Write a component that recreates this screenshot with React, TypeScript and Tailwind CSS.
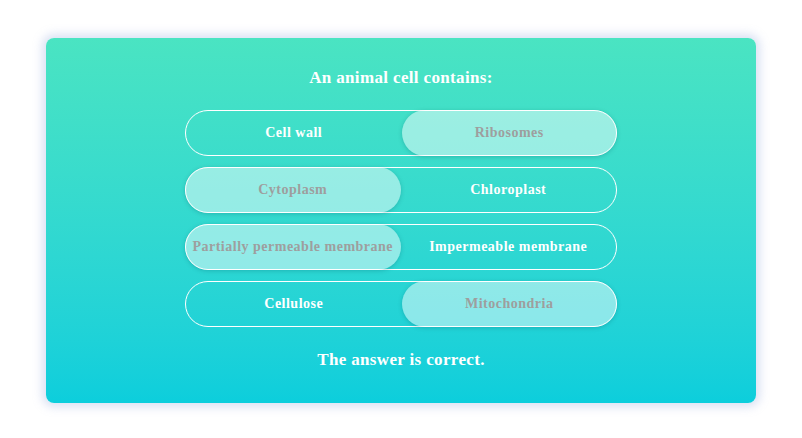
import React from "react";

const rows: { left: string; right: string; sel: "left" | "right" }[] = [
  { left: "Cell wall", right: "Ribosomes", sel: "right" },
  { left: "Cytoplasm", right: "Chloroplast", sel: "left" },
  { left: "Partially permeable membrane", right: "Impermeable membrane", sel: "left" },
  { left: "Cellulose", right: "Mitochondria", sel: "right" },
];

function Option({ text, selected, side }: { text: string; selected: boolean; side: "left" | "right" }) {
  if (selected) {
    return (
      <div
        className={
          "flex-1 h-[46px] -my-px pb-[2px] flex items-center justify-center rounded-full bg-[rgba(255,255,255,0.48)] shadow-[0_1px_4px_rgba(0,80,90,0.25)] text-[#9e9e9e] whitespace-nowrap " +
          (side === "left" ? "-ml-px" : "-mr-px")
        }
      >
        {text}
      </div>
    );
  }
  return <div className="flex-1 pb-[2px] flex items-center justify-center text-white whitespace-nowrap">{text}</div>;
}

export default function App() {
  return (
    <div className="w-[802px] h-[438px] bg-white flex items-start justify-center pt-[38px]" style={{ fontFamily: '"Liberation Serif", "Times New Roman", serif' }}>
      <div className="w-[710px] h-[365px] rounded-[8px] bg-gradient-to-b from-[#4ae4c2] to-[#0ccedc] shadow-[0_0_10px_4px_rgba(150,170,220,0.35)] flex flex-col items-center">
        <h1 className="mt-[30px] text-white font-bold text-[17px] leading-[20px] tracking-[0.35px]">An animal cell contains:</h1>
        <div className="mt-[22px] flex flex-col gap-[11px]">
          {rows.map((r, i) => (
            <div key={i} className="w-[432px] h-[46px] rounded-full border border-white flex font-bold text-[14px] tracking-[0.5px]">
              <Option text={r.left} selected={r.sel === "left"} side="left" />
              <Option text={r.right} selected={r.sel === "right"} side="right" />
            </div>
          ))}
        </div>
        <div className="mt-[23px] text-white font-bold text-[17px] leading-[20px] tracking-[0.35px]">The answer is correct.</div>
      </div>
    </div>
  );
}
